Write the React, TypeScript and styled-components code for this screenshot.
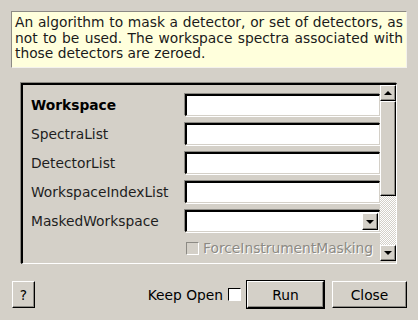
import React, { useState } from 'react';
import styled, { createGlobalStyle } from 'styled-components';

const GlobalStyle = createGlobalStyle`
  html, body {
    margin: 0;
    padding: 0;
    background: #d4d0c8;
  }
  * {
    box-sizing: border-box;
  }
`;

const fields = ['SpectraList', 'DetectorList', 'WorkspaceIndexList'];

const App: React.FC = () => {
    const [keepOpen, setKeepOpen] = useState(false);

    return (
        <StyledDialog>
            <GlobalStyle />
            <StyledDescription>
                An algorithm to mask a detector, or set of detectors, as not to be used. The workspace spectra associated with
                those detectors are zeroed.
            </StyledDescription>

            <StyledPanel>
                <StyledForm>
                    <StyledRow>
                        <StyledLabel bold>Workspace</StyledLabel>
                        <StyledInput />
                    </StyledRow>
                    {fields.map((name) => (
                        <StyledRow key={name}>
                            <StyledLabel>{name}</StyledLabel>
                            <StyledInput />
                        </StyledRow>
                    ))}
                    <StyledRow>
                        <StyledLabel>MaskedWorkspace</StyledLabel>
                        <StyledCombo>
                            <StyledComboButton>
                                <StyledArrow down />
                            </StyledComboButton>
                        </StyledCombo>
                    </StyledRow>
                    <StyledCheckRow>
                        <StyledCheckBox disabled />
                        <StyledDisabledText>ForceInstrumentMasking</StyledDisabledText>
                    </StyledCheckRow>
                </StyledForm>

                <StyledScrollbar>
                    <StyledScrollButton>
                        <StyledArrow />
                    </StyledScrollButton>
                    <StyledThumb />
                    <StyledTrack />
                    <StyledScrollButton>
                        <StyledArrow down />
                    </StyledScrollButton>
                </StyledScrollbar>
            </StyledPanel>

            <StyledFooter>
                <StyledButton width={23}>?</StyledButton>
                <StyledSpacer />
                <StyledKeepOpen onClick={() => setKeepOpen(!keepOpen)}>
                    Keep Open
                    <StyledCheckBox>{keepOpen ? '✓' : ''}</StyledCheckBox>
                </StyledKeepOpen>
                <StyledButton width={77} primary>Run</StyledButton>
                <StyledButton width={75}>Close</StyledButton>
            </StyledFooter>
        </StyledDialog>
    );
};

export default App;

const StyledDialog = styled.div`
  width: 418px;
  height: 320px;
  padding: 11px 11px 0 11px;
  background: #d4d0c8;
  font-family: "DejaVu Sans", sans-serif;
  font-size: 13.8px;
  color: #000;
  display: flex;
  flex-direction: column;
`

const StyledDescription = styled.div`
  height: 57px;
  background: #ffffdc;
  border: 1px solid #8c8a84;
  border-right-color: #f4f2ec;
  border-bottom-color: #f4f2ec;
  padding: 3px 3px 0 3px;
  line-height: 15.6px;
  text-align: justify;
  color: #1a1a1a;
`

const StyledPanel = styled.div`
  margin: 15px 0 0 10px;
  width: 376px;
  height: 181px;
  border-top: 2px solid #000;
  border-left: 2px solid #000;
  border-right: 1px solid #fff;
  border-bottom: 1px solid #fff;
  box-shadow: -1px -1px 0 #8c8a84;
  display: flex;
`

const StyledForm = styled.div`
  flex: 1;
  padding: 9px 0 0 8px;
  display: flex;
  flex-direction: column;
  gap: 7px;
`

const StyledRow = styled.div`
  display: flex;
  align-items: center;
  height: 22px;
`

const StyledLabel = styled.div<{ bold?: boolean }>`
  width: 154px;
  font-weight: ${({ bold }) => (bold ? 'bold' : 'normal')};
  color: ${({ bold }) => (bold ? '#000' : '#1e1e1e')};
`

const StyledInput = styled.div`
  width: 195px;
  height: 22px;
  background: #fff;
  border-top: 2px solid #000;
  border-left: 2px solid #000;
  border-right: 1px solid #d4d0c8;
  border-bottom: 1px solid #d4d0c8;
  box-shadow: -1px -1px 0 #8c8a84, 1px 1px 0 #fff;
`

const StyledCombo = styled(StyledInput)`
  display: flex;
  justify-content: flex-end;
  align-items: stretch;
  padding: 1px;
`

const StyledComboButton = styled.div`
  width: 16px;
  background: #d4d0c8;
  border-top: 1px solid #fff;
  border-left: 1px solid #fff;
  border-right: 1px solid #000;
  border-bottom: 1px solid #000;
  box-shadow: inset -1px -1px 0 #8c8a84;
  display: flex;
  align-items: center;
  justify-content: center;
`

const StyledArrow = styled.div<{ down?: boolean }>`
  width: 0;
  height: 0;
  border-left: 4px solid transparent;
  border-right: 4px solid transparent;
  ${({ down }) => (down ? 'border-top: 4px solid #000;' : 'border-bottom: 4px solid #000;')}
`

const StyledCheckRow = styled.div`
  display: flex;
  align-items: center;
  height: 18px;
  margin-left: 155px;
  gap: 4px;
`

const StyledCheckBox = styled.span<{ disabled?: boolean }>`
  display: inline-flex;
  align-items: center;
  justify-content: center;
  width: 13px;
  height: 13px;
  font-size: 11px;
  background: ${({ disabled }) => (disabled ? '#d4d0c8' : '#fff')};
  border-top: 1px solid ${({ disabled }) => (disabled ? '#8c8a84' : '#000')};
  border-left: 1px solid ${({ disabled }) => (disabled ? '#8c8a84' : '#000')};
  border-right: 1px solid #fff;
  border-bottom: 1px solid #fff;
`

const StyledDisabledText = styled.span`
  color: #8c8a84;
  text-shadow: 1px 1px 0 #fff;
`

const StyledScrollbar = styled.div`
  width: 17px;
  display: flex;
  flex-direction: column;
  padding-bottom: 2px;
`

const StyledScrollButton = styled.div`
  height: 16px;
  background: #d4d0c8;
  border-top: 1px solid #fff;
  border-left: 1px solid #fff;
  border-right: 1px solid #000;
  border-bottom: 1px solid #000;
  box-shadow: inset -1px -1px 0 #8c8a84;
  display: flex;
  align-items: center;
  justify-content: center;
`

const StyledThumb = styled.div`
  height: 95px;
  background: #d4d0c8;
  border-top: 1px solid #fff;
  border-left: 1px solid #fff;
  border-right: 1px solid #000;
  border-bottom: 1px solid #000;
  box-shadow: inset -1px -1px 0 #8c8a84;
`

const StyledTrack = styled.div`
  flex: 1;
  background-color: #ecebe8;
  background-image: repeating-conic-gradient(#d4d0c8 0% 25%, #ffffff 0% 50%);
  background-size: 2px 2px;
`

const StyledFooter = styled.div`
  display: flex;
  align-items: center;
  margin-top: 17px;
  padding-left: 1px;
  gap: 8px;
`

const StyledSpacer = styled.div`
  flex: 1;
`

const StyledKeepOpen = styled.label`
  display: flex;
  align-items: center;
  gap: 5px;
  margin-right: -2px;
  cursor: pointer;
`

const StyledButton = styled.button<{ width: number; primary?: boolean }>`
  width: ${({ width }) => width}px;
  height: 27px;
  font-family: "DejaVu Sans", sans-serif;
  font-size: 13.8px;
  color: #000;
  background: #d4d0c8;
  border-top: 1px solid #fff;
  border-left: 1px solid #fff;
  border-right: 1px solid #000;
  border-bottom: 1px solid #000;
  box-shadow: inset -1px -1px 0 #8c8a84${({ primary }) => (primary ? ', 0 0 0 1px #000' : '')};
  padding: 0;
`
